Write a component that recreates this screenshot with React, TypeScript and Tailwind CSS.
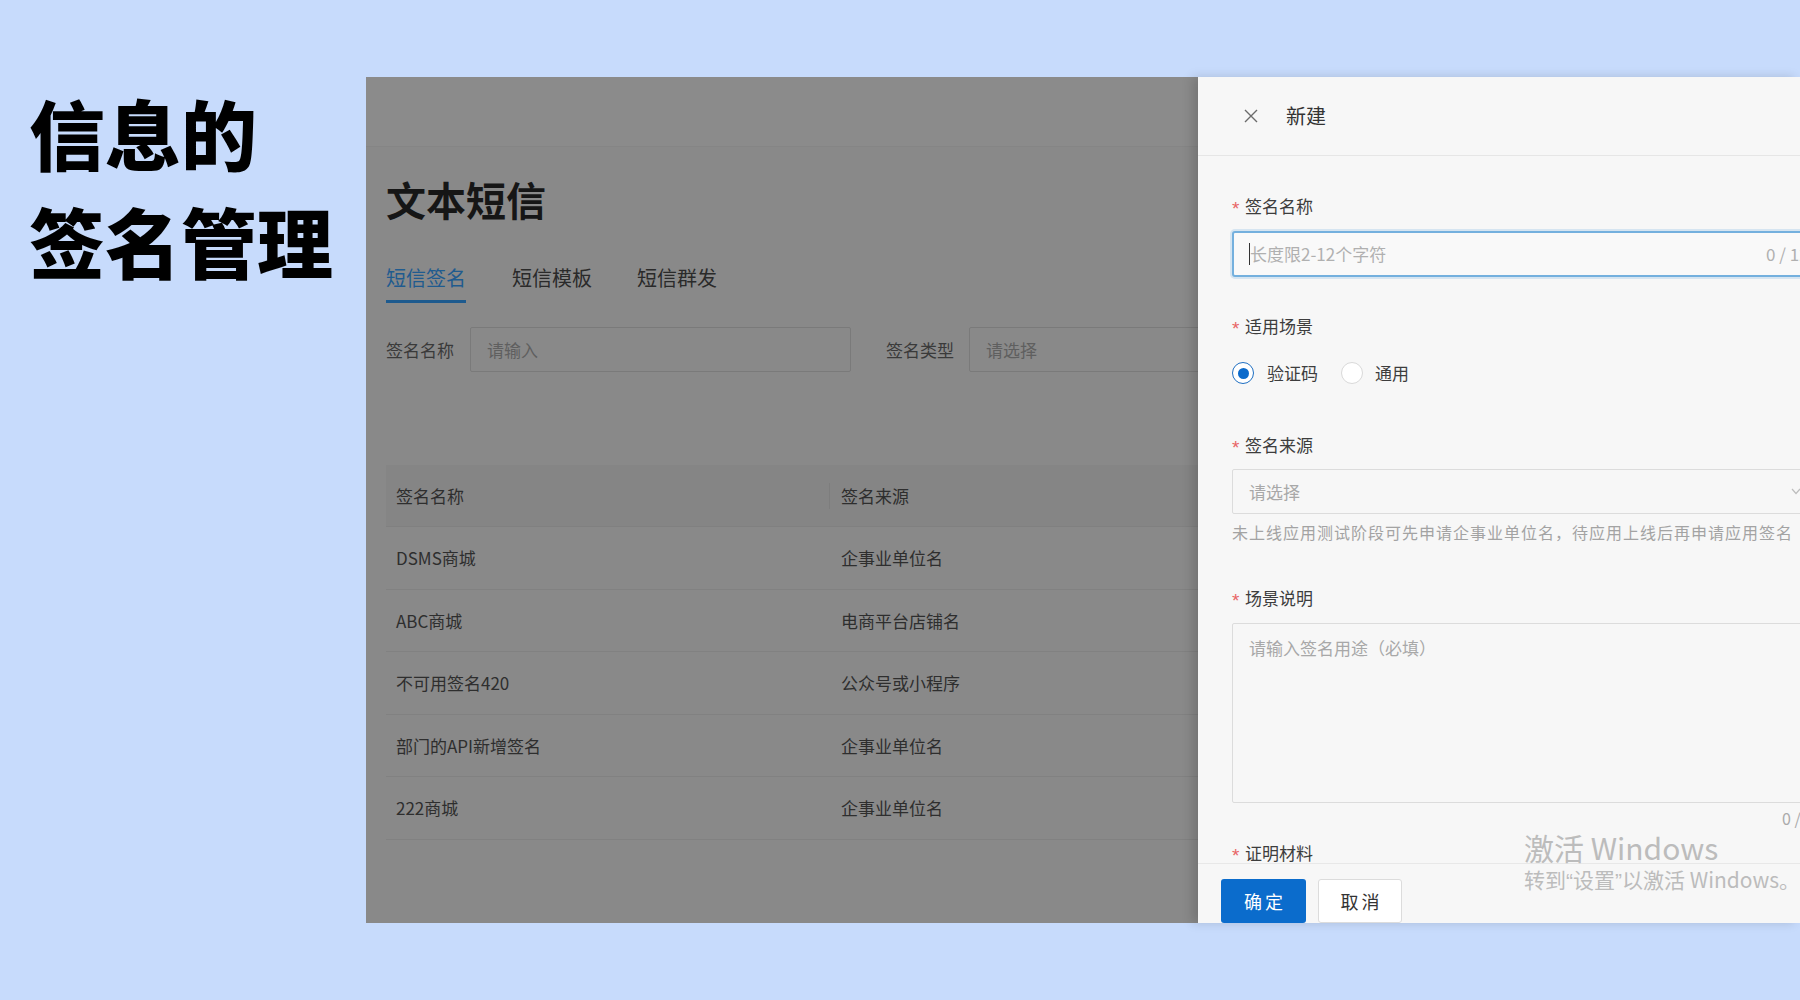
import React from "react";

const rows = [
  ["DSMS商城", "企事业单位名"],
  ["ABC商城", "电商平台店铺名"],
  ["不可用签名420", "公众号或小程序"],
  ["部门的API新增签名", "企事业单位名"],
  ["222商城", "企事业单位名"],
];

const Label = ({ text, className = "" }: { text: string; className?: string }) => (
  <div className={`h-[24px] leading-[24px] flex items-center text-[17px] text-[#3d3d3d] shrink-0 ${className}`}>
    <span className="text-[#e86565] w-[13px] text-[19px] leading-[24px] pt-[5px] font-['Liberation_Sans',sans-serif]">*</span>
    <span>{text}</span>
  </div>
);

export default function App() {
  return (
    <div className="w-[1800px] h-[1000px] bg-[#c7dbfc] flex overflow-hidden font-['Noto_Sans_CJK_SC','Noto_Sans',sans-serif]">
      {/* Left big title */}
      <div className="w-[366px] shrink-0 pl-[29px] pt-[78px] text-black font-black text-[76px] leading-[108px]">
        <div>信息的</div>
        <div>签名管理</div>
      </div>

      {/* Screenshot panel */}
      <div className="mt-[77px] h-[846px] w-[1434px] shrink-0 flex">
        {/* dimmed page */}
        <div className="w-[832px] h-full shrink-0 bg-[#898989] overflow-hidden flex flex-col">
          <div className="h-[70px] shrink-0 bg-[#8b8b8b] border-b border-[#858585]" />
          <div className="pl-[20px] flex flex-col">
            <div className="mt-[32px] h-[40px] text-[40px] leading-[40px] font-bold text-[#161616] whitespace-nowrap">
              文本短信
            </div>
            <div className="mt-[49px] flex text-[20px] leading-[20px] whitespace-nowrap">
              <div className="w-[80px] pb-[12px] border-b-[3px] border-[#1d5a8e] text-[#1f5b8f]">短信签名</div>
              <div className="ml-[46px] w-[80px] text-[#2a2a2a]">短信模板</div>
              <div className="ml-[45px] w-[80px] text-[#2a2a2a]">短信群发</div>
            </div>
            <div className="mt-[24px] h-[45px] flex items-center text-[17px] whitespace-nowrap">
              <div className="w-[84px] shrink-0 text-[#3a3a3a]">签名名称</div>
              <div className="w-[381px] h-[45px] shrink-0 border border-[#7a7a7a] rounded-[2px] flex items-center pl-[16px] text-[#5f5f5f]">
                请输入
              </div>
              <div className="ml-[35px] w-[83px] shrink-0 text-[#3a3a3a]">签名类型</div>
              <div className="w-[480px] h-[45px] shrink-0 border border-[#7a7a7a] rounded-[2px] flex items-center pl-[16px] text-[#5f5f5f]">
                请选择
              </div>
            </div>
            <div className="mt-[93px] w-[900px] flex flex-col text-[17px] text-[#2e2e2e] whitespace-nowrap">
              <div className="h-[62px] bg-[#858585] border-b border-[#808080] flex items-center">
                <div className="w-[443px] pl-[10px] shrink-0">签名名称</div>
                <div className="w-px h-[26px] bg-[#7d7d7d] shrink-0" />
                <div className="pl-[11px]">签名来源</div>
              </div>
              {rows.map(([a, b]) => (
                <div key={a} className="h-[62.6px] border-b border-[#818181] flex items-center">
                  <div className="w-[443px] pl-[10px] shrink-0">{a}</div>
                  <div className="pl-[12px]">{b}</div>
                </div>
              ))}
            </div>
          </div>
        </div>

        {/* Drawer */}
        <div className="relative w-[602px] h-full shrink-0 bg-[#f7f7f7] flex flex-col overflow-hidden shadow-[-6px_0_10px_rgba(0,0,0,0.15)]">
          <div className="h-[79px] shrink-0 border-b border-[#e6e6e6] flex items-center pl-[46px]">
            <svg width="14" height="14" viewBox="0 0 14 14" className="shrink-0">
              <path d="M1 1L13 13M13 1L1 13" stroke="#6b6b6b" strokeWidth="1.4" fill="none" />
            </svg>
            <span className="ml-[28px] text-[20px] text-[#333]">新建</span>
          </div>

          <div className="flex-1 overflow-hidden pl-[34px] flex flex-col">
            <Label text="签名名称" className="mt-[38px]" />
            <div className="mt-[13px] w-[700px] h-[46px] shrink-0 border-2 border-[#74b0de] rounded-[3px] shadow-[0_0_0_2px_rgba(116,176,222,0.25)] bg-[#f9f9f9] flex items-center pl-[15px] text-[17px] whitespace-nowrap">
              <span className="w-px h-[22px] bg-[#333] shrink-0" />
              <span className="w-[516px] text-[#b0b0b0] shrink-0">长度限2-12个字符</span>
              <span className="text-[#b0b0b0]">0 / 12</span>
            </div>

            <Label text="适用场景" className="mt-[37px]" />
            <div className="mt-[23px] h-[24px] flex items-center text-[17px] text-[#3d3d3d] shrink-0 whitespace-nowrap">
              <span className="w-[22px] h-[22px] rounded-full border-[1.5px] border-[#1f6fc2] bg-white flex items-center justify-center shrink-0">
                <span className="w-[11px] h-[11px] rounded-full bg-[#0b6acb]" />
              </span>
              <span className="ml-[13px]">验证码</span>
              <span className="ml-[23px] w-[22px] h-[22px] rounded-full border border-[#d9d9d9] bg-white shrink-0" />
              <span className="ml-[12px]">通用</span>
            </div>

            <Label text="签名来源" className="mt-[48px]" />
            <div className="mt-[12px] w-[700px] h-[45px] shrink-0 border border-[#dcdcdc] rounded-[2px] flex items-center pl-[16px] text-[17px] whitespace-nowrap">
              <span className="w-[542px] text-[#a8a8a8] shrink-0">请选择</span>
              <svg width="10" height="7" viewBox="0 0 10 7" className="shrink-0">
                <path d="M1 1L5 5.5L9 1" stroke="#bdbdbd" strokeWidth="1.2" fill="none" />
              </svg>
            </div>
            <div className="mt-[8px] h-[20px] leading-[20px] text-[16px] tracking-[1px] text-[#a3a3a3] whitespace-nowrap shrink-0">
              未上线应用测试阶段可先申请企事业单位名，待应用上线后再申请应用签名
            </div>

            <Label text="场景说明" className="mt-[44px]" />
            <div className="mt-[13px] w-[700px] h-[180px] shrink-0 border border-[#dcdcdc] rounded-[2px] pl-[16px] pt-[11px] text-[17px] text-[#a8a8a8] whitespace-nowrap">
              请输入签名用途（必填）
            </div>
            <div className="mt-[5px] h-[20px] leading-[20px] pl-[550px] text-[16px] text-[#aaaaaa] whitespace-nowrap shrink-0">
              0 / 100
            </div>

            <Label text="证明材料" className="mt-[13px]" />
          </div>

          <div className="h-[60px] shrink-0 border-t border-[#e8e8e8] pl-[23px] pt-[15px] flex gap-[12px] bg-[#f7f7f7]">
            <div className="w-[85px] h-[44px] rounded-[3px] bg-[#0b6ccc] text-white text-[18px] tracking-[3px] pl-[3px] flex items-center justify-center">
              确定
            </div>
            <div className="w-[84px] h-[44px] rounded-[3px] bg-white border border-[#dcdcdc] text-[#333] text-[18px] tracking-[3px] pl-[3px] flex items-center justify-center">
              取消
            </div>
          </div>

          <div className="absolute left-[326px] top-[753px] text-[#bcbcbc] whitespace-nowrap pointer-events-none">
            <div className="text-[30px] leading-[34px]">激活 Windows</div>
            <div className="mt-[2px] text-[21px] leading-[26px]">
              转到<span className="font-['Liberation_Sans',sans-serif]">“</span>设置<span className="font-['Liberation_Sans',sans-serif]">”</span>以激活 Windows。
            </div>
          </div>
        </div>
      </div>
    </div>
  );
}
